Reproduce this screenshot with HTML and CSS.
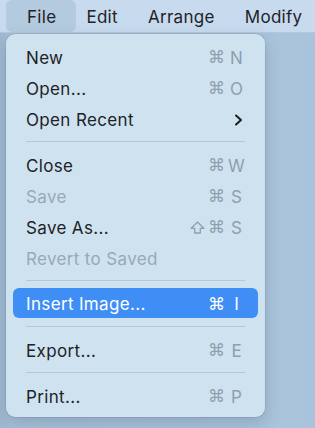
FILE: index.html
```html
<!DOCTYPE html>
<html>
<head>
<meta charset="utf-8">
<link rel="stylesheet" href="styles.css">
</head>
<body>
<div class="screen">
  <nav class="menubar">
    <span class="mb-item active">File</span>
    <span class="mb-item">Edit</span>
    <span class="mb-item">Arrange</span>
    <span class="mb-item">Modify</span>
  </nav>
  <div class="desk">
    <div class="menu">
      <div class="row"><span class="label">New</span><span class="sc"><span class="mods">⌘</span><span class="key">N</span></span></div>
      <div class="row"><span class="label">Open...</span><span class="sc"><span class="mods">⌘</span><span class="key">O</span></span></div>
      <div class="row"><span class="label">Open Recent</span>
        <svg class="chev" width="9" height="12" viewBox="0 0 9 12"><path d="M2 1.5 L7 6 L2 10.5" fill="none" stroke="#1c1c1e" stroke-width="2" stroke-linecap="round" stroke-linejoin="round"/></svg>
      </div>
      <div class="sep"></div>
      <div class="row"><span class="label">Close</span><span class="sc"><span class="mods">⌘</span><span class="key">W</span></span></div>
      <div class="row disabled"><span class="label">Save</span><span class="sc"><span class="mods">⌘</span><span class="key">S</span></span></div>
      <div class="row"><span class="label">Save As...</span><span class="sc"><svg class="shift" width="15" height="13" viewBox="0 0 15 13"><path d="M7.5 1 L13.8 7.3 H10.3 V12 H4.7 V7.3 H1.2 Z" fill="none" stroke="currentColor" stroke-width="1.3" stroke-linejoin="round"/></svg><span class="mods">⌘</span><span class="key">S</span></span></div>
      <div class="row disabled"><span class="label">Revert to Saved</span></div>
      <div class="sep"></div>
      <div class="row selected"><span class="label">Insert Image...</span><span class="sc"><span class="mods">⌘</span><span class="key">I</span></span></div>
      <div class="sep"></div>
      <div class="row"><span class="label">Export...</span><span class="sc"><span class="mods">⌘</span><span class="key">E</span></span></div>
      <div class="sep"></div>
      <div class="row"><span class="label">Print...</span><span class="sc"><span class="mods">⌘</span><span class="key">P</span></span></div>
    </div>
  </div>
</div>
</body>
</html>
```

FILE: styles.css
```css
* { box-sizing: border-box; }
html, body { margin: 0; padding: 0; }
body {
  width: 315px;
  height: 428px;
  overflow: hidden;
  font-family: Inter, "Noto Sans", "DejaVu Sans", sans-serif;
  background: #a9c3db;
}
.screen {
  width: 315px;
  height: 428px;
  display: flex;
  flex-direction: column;
}
.menubar {
  height: 33px;
  flex: none;
  background: #c7daee;
  display: flex;
  align-items: stretch;
  padding-left: 6px;
  border-bottom: 1px solid #b3c8dd;
  white-space: nowrap;
}
.mb-item {
  display: flex;
  align-items: center;
  padding: 1px 15px 0;
  font-size: 17px;
  letter-spacing: 0.3px;
  color: #1f2328;
}
.mb-item.active {
  background: #b4cade;
  padding: 1px 20px 0 21px;
  margin-right: -5px;
  border-radius: 6px;
}
.desk {
  flex: 1;
  background: linear-gradient(90deg, #9fb8cf 0px, #a7c0d8 12px, #aac4dc 280px, #a9c3dc 100%);
  padding: 1px 0 0 6px;
}
.menu {
  width: 259px;
  background: #cee2f0;
  border-radius: 9px;
  padding: 7px 7px 6px;
  box-shadow: 0 0 0 0.5px rgba(90, 110, 130, 0.35), 0 6px 16px rgba(60, 85, 110, 0.25);
}
.row {
  height: 31px;
  display: flex;
  align-items: center;
  justify-content: space-between;
  padding: 2px 12px 0 13px;
  font-size: 17px;
  letter-spacing: 0.35px;
  color: #1e2226;
  border-radius: 6px;
  white-space: nowrap;
}
.row.disabled { color: #98a9b7; }
.row.selected { background: #3f8ef6; color: #ffffff; height: 30px; margin-bottom: 1px; }
.sc {
  display: flex;
  align-items: center;
  color: #8e9fad;
  letter-spacing: 0;
}
.row.selected .sc { color: #ffffff; }
.mods {
  font-family: "DejaVu Sans", sans-serif;
  font-size: 17px;
  line-height: 1;
}
.shift { margin-right: 3px; margin-top: -1px; }
.key {
  width: 19px;
  margin-left: 2px;
  text-align: center;
}
.chev { margin-right: 3px; }
.sep {
  height: 15px;
  display: flex;
  align-items: center;
  padding: 0 13px 0 13px;
}
.sep::before {
  content: "";
  flex: 1;
  height: 1px;
  background: #b5c8d7;
}
```
